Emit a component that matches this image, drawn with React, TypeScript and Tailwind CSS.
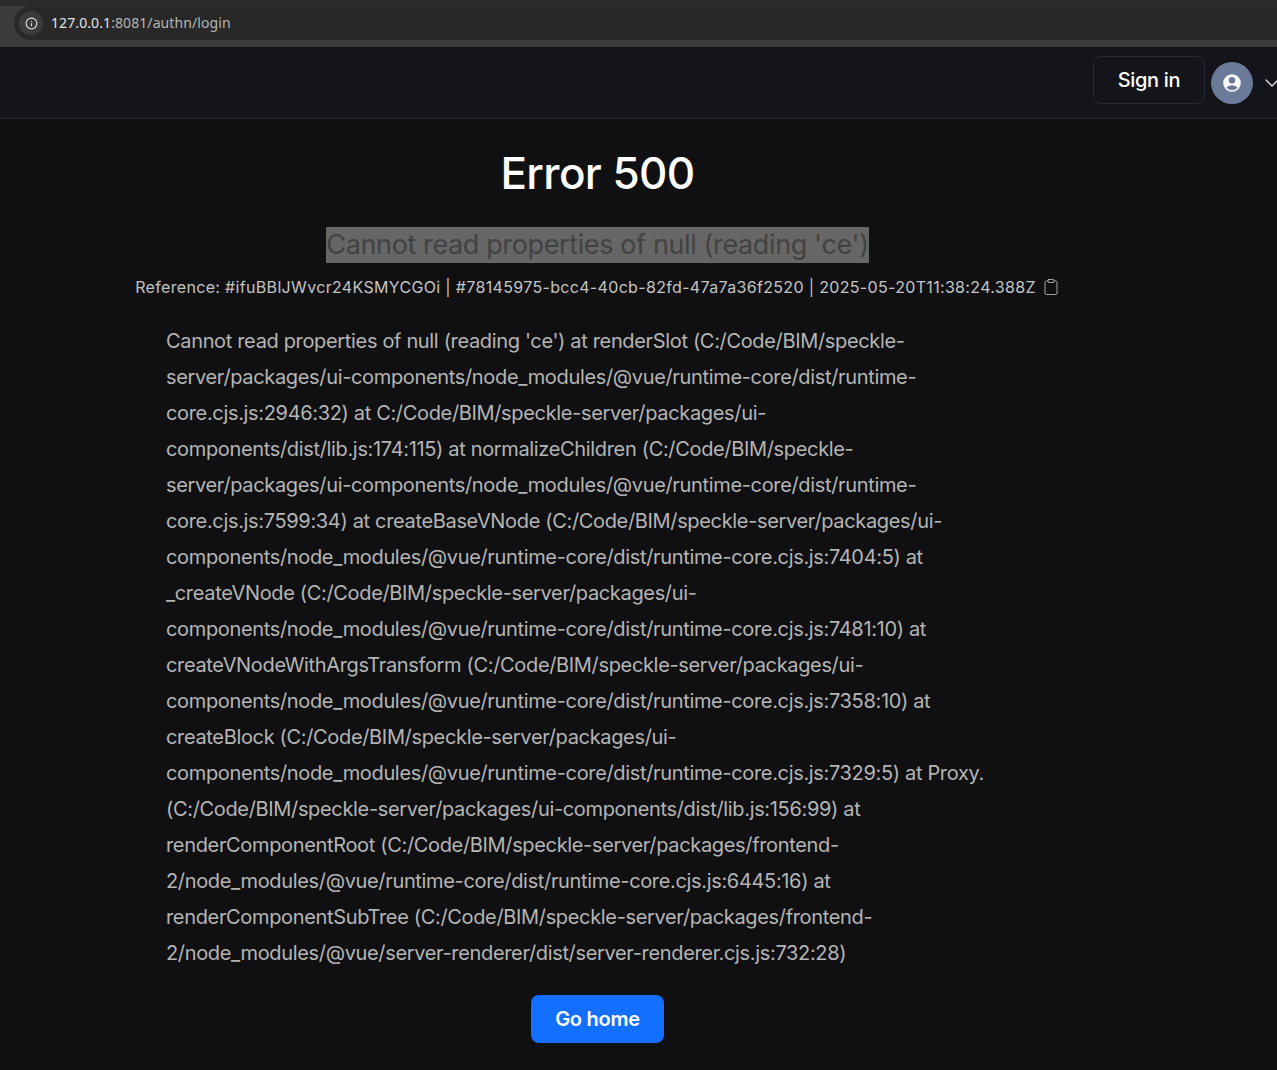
import { ChevronDown, Clipboard, Info } from "lucide-react";

const stack =
  "Cannot read properties of null (reading 'ce') at renderSlot (C:/Code/BIM/speckle-server/packages/ui-components/node_modules/@vue/runtime-core/dist/runtime-core.cjs.js:2946:32) at C:/Code/BIM/speckle-server/packages/ui-components/dist/lib.js:174:115) at normalizeChildren (C:/Code/BIM/speckle-server/packages/ui-components/node_modules/@vue/runtime-core/dist/runtime-core.cjs.js:7599:34) at createBaseVNode (C:/Code/BIM/speckle-server/packages/ui-components/node_modules/@vue/runtime-core/dist/runtime-core.cjs.js:7404:5) at _createVNode (C:/Code/BIM/speckle-server/packages/ui-components/node_modules/@vue/runtime-core/dist/runtime-core.cjs.js:7481:10) at createVNodeWithArgsTransform (C:/Code/BIM/speckle-server/packages/ui-components/node_modules/@vue/runtime-core/dist/runtime-core.cjs.js:7358:10) at createBlock (C:/Code/BIM/speckle-server/packages/ui-components/node_modules/@vue/runtime-core/dist/runtime-core.cjs.js:7329:5) at Proxy.\u200B(C:/Code/BIM/speckle-server/packages/ui-components/dist/lib.js:156:99) at renderComponentRoot (C:/Code/BIM/speckle-server/packages/frontend-2/node_modules/@vue/runtime-core/dist/runtime-core.cjs.js:6445:16) at renderComponentSubTree (C:/Code/BIM/speckle-server/packages/frontend-2/node_modules/@vue/server-renderer/dist/server-renderer.cjs.js:732:28)";

export default function App() {
  return (
    <div className="h-[1070px] w-[1277px] overflow-hidden bg-[#101012] font-['Inter',sans-serif]">
      {/* Browser chrome */}
      <div className="flex h-[47px] flex-col bg-[#3b3b3b]">
        <div className="h-[6px] bg-[#2b2b2b]" />
        <div className="ml-[14px] flex h-[34px] items-center rounded-l-full bg-[#282828]">
          <div className="ml-[5px] flex h-[24px] w-[24px] items-center justify-center rounded-full bg-[#3b3b3b]">
            <Info size={13} className="text-[#e3e3e3]" strokeWidth={2} />
          </div>
          <span className="ml-[8px] font-['Noto_Sans',sans-serif] text-sm tracking-[0.09px] text-[#e3e3e3]">
            127.0.0.1<span className="text-[#b5b5b5]">:8081/authn/login</span>
          </span>
        </div>
      </div>

      {/* Nav */}
      <div className="flex h-[72px] items-center justify-end border-b border-[#2b2c36] bg-[#14151a]">
        <button className="mb-[6px] h-[48px] w-[112px] rounded-lg border border-[#272833] text-xl font-medium tracking-[-0.3px] text-white">
          Sign in
        </button>
        <div className="ml-[6px] flex h-[42px] w-[42px] items-center justify-center rounded-full bg-[#6b7a99]">
          <svg viewBox="0 0 20 20" className="h-[22px] w-[22px]" fill="white">
            <path
              fillRule="evenodd"
              d="M18 10a8 8 0 1 1-16 0 8 8 0 0 1 16 0Zm-5-2.5a3 3 0 1 1-6 0 3 3 0 0 1 6 0ZM10 12c-2.2 0-4.1.9-5 2.3A6.5 6.5 0 0 0 10 16.5c2 0 3.8-.9 5-2.2-.9-1.4-2.8-2.3-5-2.3Z"
              clipRule="evenodd"
            />
          </svg>
        </div>
        <ChevronDown size={24} strokeWidth={1.25} className="ml-[7px] -mr-[7px] shrink-0 text-[#e5e5e5]" />
      </div>

      {/* Error content */}
      <div className="flex w-[1195px] flex-col items-center">
        <h1 className="mt-[26px] text-[44px] leading-[56px] font-medium tracking-[-0.6px] text-white">Error 500</h1>
        <h2 className="mt-[26px] text-[27px] leading-[36px] tracking-[-0.38px] text-[#424242]">
          <span className="block bg-[#666666]">Cannot read properties of null (reading 'ce')</span>
        </h2>
        <div className="mt-[12px] flex h-[24px] items-center text-base tracking-[0.33px] text-[#c4c4c4]">
          <span>Reference: #ifuBBlJWvcr24KSMYCGOi | #78145975-bcc4-40cb-82fd-47a7a36f2520 | 2025-05-20T11:38:24.388Z</span>
          <Clipboard size={18} strokeWidth={1.1} className="ml-[6px]" />
        </div>
        <div className="mt-[24px] ml-[166px] w-[822px] self-start text-xl leading-[36px] tracking-[-0.34px] break-words text-[#b5b5b5]">
          {stack}
        </div>
        <button className="mt-[24px] h-[48px] w-[133px] rounded-lg bg-[#136fff] text-xl font-semibold tracking-[-0.25px] text-white">
          Go home
        </button>
      </div>
    </div>
  );
}
